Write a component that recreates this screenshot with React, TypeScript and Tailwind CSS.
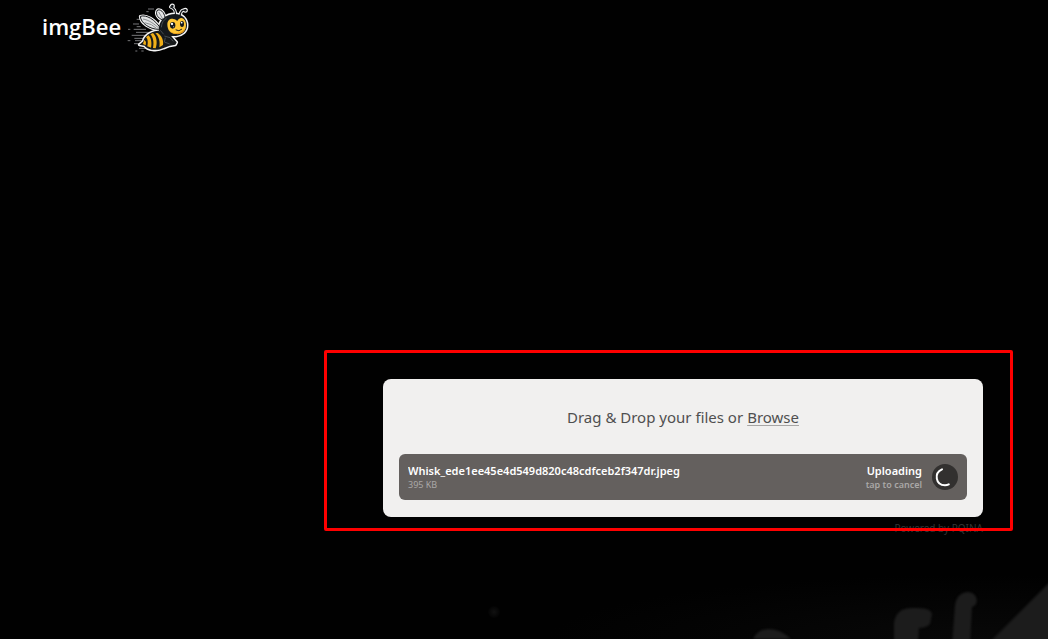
function BeeLogo() {
  return (
    <svg className="h-14 w-[70px]" viewBox="0 0 210 168" role="img" aria-label="Bee">
      <g stroke="#77777a" strokeWidth="3" fill="none">
        <path d="M72 27H90M67 35H74M38 58H48M27 72H45M38 80H50M12 88H19M29 88H66M36 97H74M23 106H78M31 115H72M11 122H19M33 122H60M30 131H48M45 145H67M34 153H40M52 153H59" />
      </g>
      <g stroke="#f5f5f5" strokeWidth="9" strokeLinejoin="round" strokeLinecap="round" fill="#f5f5f5">
        <path d="M104 88C77 88 50 69 49 49C67 43 93 59 109 84Z" />
        <path d="M117 60C99 55 93 38 101 30C114 27 123 43 124 58Z" />
        <path d="M102 92C75 95 60 111 58 124L46 134L62 137C70 150 98 154 119 144L137 137L154 134L158 127L147 115L139 105Z" />
        <path d="M104 92C104 58 128 42 153 42C175 42 189 57 189 76C189 94 175 106 156 108L120 108Z" />
        <path d="M154 46C156 34 150 24 140 21M168 46C170 34 175 28 184 31" fill="none" strokeWidth="10" />
        <circle cx="145" cy="18" r="3" />
        <circle cx="184" cy="31" r="3" />
      </g>
      <path d="M104 88C77 88 50 69 49 49C67 43 93 59 109 84Z" fill="#dfe1e2" stroke="#16191c" strokeWidth="3" />
      <path d="M57 57C74 60 89 70 106 86M62 68L82 74L96 84" fill="none" stroke="#8b8f92" strokeWidth="3" />
      <path d="M117 60C99 55 93 38 101 30C114 27 123 43 124 58Z" fill="#e4e5e6" stroke="#16191c" strokeWidth="3" />
      <path d="M104 36L117 58" fill="none" stroke="#8b8f92" strokeWidth="3" />
      <path d="M102 92C75 95 60 111 58 124L46 134L62 137C70 150 98 154 119 144L137 137L154 134L158 127L147 115L139 105Z" fill="#171a1b" />
      <g fill="#f1af18">
        <path d="M73 106C82 113 84 130 81 143L70 139C73 127 71 115 66 112Z" />
        <path d="M87 99C98 109 101 128 95 145L87 144C91 127 87 111 79 103Z" />
        <path d="M101 99C112 106 120 121 117 135L106 142C109 126 105 110 94 100Z" />
        <path d="M61 119L66 126L65 136L57 132Z" />
      </g>
      <path d="M104 92C104 58 128 42 153 42C175 42 189 57 189 76C189 94 175 106 156 108L120 108Z" fill="#15191c" />
      <path d="M112 82C113 68 119 60 128 54M109 91L119 103M121 108L138 113L148 124M124 113L121 126L137 132" fill="none" stroke="#454c50" strokeWidth="3" />
      <path d="M130 73C130 61 139 55 148 57C154 58 157 61 160 63C163 56 171 51 178 56C187 62 188 79 183 89C178 98 168 103 155 102C139 101 130 90 130 73Z" fill="#ffc735" />
      <path d="M131 85C137 98 151 102 164 98C174 96 181 90 184 84C181 99 168 104 155 102C142 101 134 94 131 85Z" fill="#e79a18" />
      <ellipse cx="146" cy="76" rx="8" ry="10" fill="#14181b" />
      <ellipse cx="174" cy="72" rx="6" ry="9" fill="#14181b" />
      <g fill="#fff">
        <circle cx="144" cy="72" r="3.5" />
        <circle cx="149" cy="80" r="1.5" />
        <circle cx="173" cy="68" r="2.5" />
      </g>
      <path d="M156 90Q165 96 173 88" fill="none" stroke="#15191c" strokeWidth="3" strokeLinecap="round" />
      <path d="M154 46C156 34 150 24 140 21M168 46C170 34 175 28 184 31" fill="none" stroke="#15191c" strokeWidth="4" strokeLinecap="round" />
      <circle cx="145" cy="18" r="4" fill="#15191c" />
      <circle cx="184" cy="31" r="4" fill="#15191c" />
    </svg>
  );
}

function Backdrop() {
  return (
    <svg className="pointer-events-none absolute right-0 bottom-0 h-[99px] w-[668px]" viewBox="0 0 668 99" aria-hidden="true">
      <defs>
        <radialGradient id="haze" cx="0.9" cy="1" r="0.65">
          <stop offset="0" stopColor="#080808" />
          <stop offset="1" stopColor="#010101" />
        </radialGradient>
        <radialGradient id="spark">
          <stop offset="0" stopColor="#111111" />
          <stop offset="1" stopColor="#030303" />
        </radialGradient>
        <filter id="soft" colorInterpolationFilters="sRGB">
          <feGaussianBlur stdDeviation="0.8" />
        </filter>
      </defs>
      <rect width="668" height="99" fill="url(#haze)" />
      <g fill="#1c1c1c" filter="url(#soft)">
        <path d="M373 99Q378 89 388 89Q399 88 411 99Z" />
        <path d="M514 105V83Q516 67 534 68Q551 67 552 74L550 84Q546 88 539 88L538 105Z" />
        <path d="M572 105L575 65Q577 53 587 52Q596 52 597 61Q596 66 592 67L590 105Z" />
        <path d="M607 105L675 37V105Z" />
      </g>
      <circle cx="114" cy="72" r="6" fill="url(#spark)" />
    </svg>
  );
}

function FileItem() {
  return (
    <li className="flex h-[46px] items-center justify-between rounded-md bg-[#64605e] pr-[9px] pl-[9px] text-white">
      <div className="min-w-0">
        <p className="truncate text-[11px] leading-4 font-semibold">Whisk_ede1ee45e4d549d820c48cdfceb2f347dr.jpeg</p>
        <p className="text-[9px] leading-3 text-[#aaa8a7]">395 KB</p>
      </div>
      <div className="flex shrink-0 items-center gap-2.5">
        <div className="text-right">
          <p className="text-[11px] leading-4 font-semibold">Uploading</p>
          <p className="text-[9px] leading-3 font-semibold text-[#aaa8a7]">tap to cancel</p>
        </div>
        <button type="button" aria-label="Cancel upload" className="size-[26px] rounded-full bg-[#32302f]">
          <svg viewBox="0 0 26 26" className="size-[26px]" fill="none" stroke="white" strokeWidth="2" strokeLinecap="round">
            <path d="M10 5.4C1.8 9 3.4 21 13 21.3C14.3 21.3 15.6 21 16.8 20.4" />
          </svg>
        </button>
      </div>
    </li>
  );
}

export default function App() {
  return (
    <div className="relative flex min-h-screen flex-col overflow-hidden bg-[#010101] font-['Noto_Sans','Open_Sans',sans-serif]">
      <Backdrop />
      <header className="relative pl-[42px]">
        <a href="#" className="inline-flex items-center gap-[3px] text-white">
          <span className="pb-1 font-['Open_Sans','Noto_Sans',sans-serif] text-[22px] leading-8 font-semibold">imgBee</span>
          <BeeLogo />
        </a>
      </header>
      <main className="flex grow justify-end pt-[323px] pr-[65px] pb-20 pl-[65px]">
        <section className="relative h-fit w-full max-w-[600px]">
          <div className="rounded-lg bg-[#f1f0ef] px-4 pb-[17px]">
            <p className="flex h-[75px] items-center justify-center gap-1 text-[15px] leading-6 text-[#4f4f4f]">
              <span>Drag &amp; Drop your files or</span>
              <a href="#" className="underline decoration-[#a7a6a5] decoration-1 underline-offset-2">Browse</a>
            </p>
            <ul>
              <FileItem />
            </ul>
          </div>
          <p className="mt-[3px] text-right text-[10px] leading-4">
            <a href="#" className="text-[#343434]">Powered by PQINA</a>
          </p>
          <div className="pointer-events-none absolute -top-[29px] -right-[30px] bottom-[5px] -left-[59px] rounded-xs border-3 border-[#fe0000]" />
        </section>
      </main>
    </div>
  );
}
